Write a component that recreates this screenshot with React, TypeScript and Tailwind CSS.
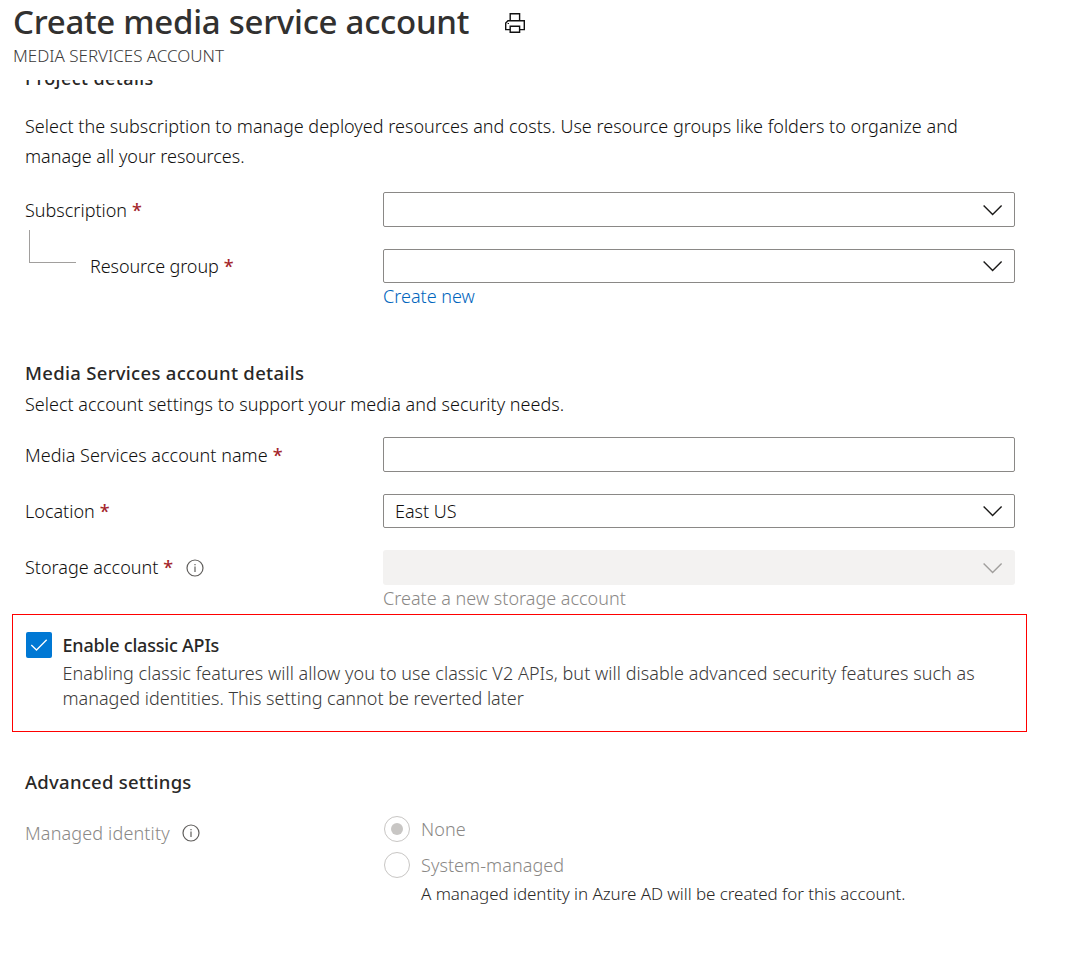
import type { ReactNode } from 'react';

function Required() {
  return <span className="ml-[5px] font-medium text-[#a4262c]">*</span>;
}

function InfoIcon({ className }: { className: string }) {
  return (
    <svg className={className} width="18" height="18" viewBox="0 0 18 18" fill="none" stroke="#605e5c">
      <circle cx="9" cy="9" r="8" strokeWidth="1.2" />
      <path d="M9 7.5V13" strokeWidth="1.2" />
      <path d="M9 5V6.3" strokeWidth="1.2" />
    </svg>
  );
}

function Chevron({ color }: { color: string }) {
  return (
    <svg width="20" height="12" viewBox="0 0 20 12" fill="none" stroke={color} strokeWidth="1.4">
      <path d="M0.6 1.4L9.6 10.6L18.6 1.4" />
    </svg>
  );
}

function PrinterIcon() {
  return (
    <svg width="22" height="22" viewBox="0 0 22 22" fill="none" stroke="#111" strokeWidth="1.4">
      <path d="M6.2 8.5V1.7H15.6V8.5" />
      <path d="M6 17.6H1.7V11L4 8.7H20.3V17.6H16" />
      <path d="M6.2 14.2H15.6V20.3H6.2Z" />
      <path d="M3.6 11.5H5" strokeWidth="1" />
    </svg>
  );
}

function Field({ label, children }: { label: ReactNode; children: ReactNode }) {
  return (
    <div className="flex items-center">
      <div className="flex w-[358px] shrink-0 items-center leading-[26px]">{label}</div>
      {children}
    </div>
  );
}

function SelectBox({ tall, value }: { tall?: boolean; value?: string }) {
  return (
    <div
      className={
        (tall ? 'h-[35px]' : 'h-[34px]') +
        ' flex w-[632px] items-center justify-between rounded-[2px] border border-[#8a8886] pr-[11px] pl-[11px]'
      }
    >
      <span>{value}</span>
      <Chevron color="#1b1a19" />
    </div>
  );
}

export default function App() {
  return (
    <div className="h-[958px] w-[1092px] overflow-hidden bg-white font-['Noto_Sans',sans-serif] text-[18px] font-light text-[#11100f]">
      <header className="h-[80px] pl-[13px]">
        <div className="flex h-[44px] items-center">
          <h1 className="w-[491px] text-[33px] leading-[44px] font-medium tracking-[-0.27px] whitespace-nowrap text-[#323130]">
            Create media service account
          </h1>
          <div className="pt-[2px]">
            <PrinterIcon />
          </div>
        </div>
        <p className="-mt-[2px] text-[17px] leading-[27px] tracking-[-0.02px] text-[#3b3a39]">MEDIA SERVICES ACCOUNT</p>
      </header>

      <main className="h-[878px] overflow-hidden">
        <section className="pl-[25px]">
          <h2 className="-mt-[15px] text-[18px] leading-[26px] font-medium tracking-[0.45px] text-[#292827]">
            Project details
          </h2>
          <p className="mt-[20px] w-[960px] leading-[30px] tracking-[0.01px]">
            Select the subscription to manage deployed resources and costs. Use resource groups like folders to organize
            and
            <br />
            <span className="tracking-[-0.03px]">manage all your resources.</span>
          </p>

          <div className="mt-[21px]">
            <Field
              label={
                <span>
                  Subscription
                  <Required />
                </span>
              }
            >
              <SelectBox tall />
            </Field>
          </div>
          <div className="mt-[22px]">
            <Field
              label={
                <>
                  <span className="-mt-[39px] ml-[4px] h-[33px] w-[47px] border-b border-l border-[#a19f9d]" />
                  <span className="ml-[14px] tracking-[-0.1px]">
                    Resource group
                    <Required />
                  </span>
                </>
              }
            >
              <SelectBox />
            </Field>
          </div>
          <a className="ml-[358px] block leading-[26px] text-[#0065bd]">Create new</a>
        </section>

        <section className="mt-[51px] pl-[25px]">
          <h2 className="text-[18.5px] leading-[26px] font-medium tracking-[0.3px] text-[#292827]">
            Media Services account details
          </h2>
          <p className="mt-[5px] leading-[26px] tracking-[0.015px]">
            Select account settings to support your media and security needs.
          </p>

          <div className="mt-[20px]">
            <Field
              label={
                <span className="tracking-[0.02px]">
                  Media Services account name
                  <Required />
                </span>
              }
            >
              <div className="h-[35px] w-[632px] rounded-[2px] border border-[#8a8886]" />
            </Field>
          </div>
          <div className="mt-[22px]">
            <Field
              label={
                <span>
                  Location
                  <Required />
                </span>
              }
            >
              <SelectBox value="East US" />
            </Field>
          </div>
          <div className="mt-[22px]">
            <Field
              label={
                <>
                  <span className="-mt-[2px]">
                    Storage account
                    <Required />
                  </span>
                  <InfoIcon className="ml-[13px]" />
                </>
              }
            >
              <div className="flex h-[35px] w-[632px] items-center justify-end rounded-[3px] bg-[#f3f2f1] pr-[12px]">
                <Chevron color="#a19f9d" />
              </div>
            </Field>
          </div>
          <p className="ml-[358px] leading-[26px] text-[#8a8886]">Create a new storage account</p>
        </section>

        <section className="mt-[3px] ml-[12px] flex h-[118px] w-[1015px] border border-[#f00] pt-[17px] pl-[13px]">
          <span className="flex size-[26px] shrink-0 items-center justify-center rounded-[2px] bg-[#0078d4]">
            <svg width="18" height="14" viewBox="0 0 18 14" fill="none" stroke="#fff" strokeWidth="1.3">
              <path d="M1.3 7L6.5 12L16.7 1.8" />
            </svg>
          </span>
          <div className="ml-[10.5px]">
            <h3 className="leading-[26px] font-medium tracking-[-0.2px] text-[#292827]">Enable classic APIs</h3>
            <p className="mt-[3px] leading-[25px] tracking-[0.045px] whitespace-nowrap text-[#3b3a39]">
              Enabling classic features will allow you to use classic V2 APIs, but will disable advanced security
              features such as
              <br />
              <span className="tracking-normal">managed identities. This setting cannot be reverted later</span>
            </p>
          </div>
        </section>

        <section className="mt-[37px] pl-[25px]">
          <h2 className="text-[18.5px] leading-[26px] font-medium tracking-[0.25px] text-[#292827]">
            Advanced settings
          </h2>
          <div className="mt-[21px] flex">
            <div className="mt-[4px] flex h-[26px] w-[359px] items-center leading-[26px] text-[#8a8886]">
              <span className="tracking-[0.15px]">Managed identity</span>
              <InfoIcon className="ml-[12.5px]" />
            </div>
            <div>
              <div className="flex h-[26px] items-center text-[#8a8886]">
                <span className="flex size-[26px] items-center justify-center rounded-full border border-[#c8c6c4]">
                  <span className="size-[12px] rounded-full bg-[#c8c6c4]" />
                </span>
                <span className="ml-[11px] leading-[26px] tracking-[0.1px]">None</span>
              </div>
              <div className="mt-[10px] flex h-[26px] items-center text-[#8a8886]">
                <span className="size-[26px] rounded-full border border-[#c8c6c4]" />
                <span className="ml-[11px] leading-[26px] tracking-[0.06px]">System-managed</span>
              </div>
              <p className="mt-px ml-[37px] text-[17px] leading-[30px] tracking-[-0.05px] text-[#292827]">
                A managed identity in Azure AD will be created for this account.
              </p>
            </div>
          </div>
        </section>
      </main>
    </div>
  );
}
